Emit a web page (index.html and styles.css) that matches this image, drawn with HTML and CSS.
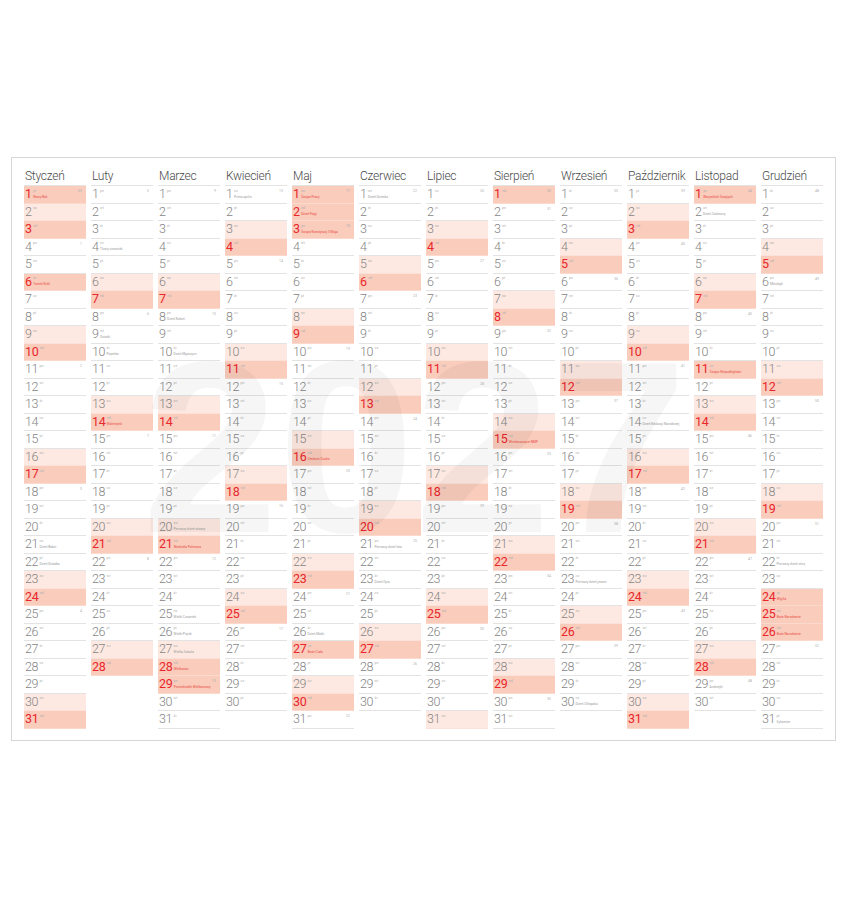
FILE: index.html
```html
<!DOCTYPE html>
<html lang="pl">
<head>
<meta charset="utf-8">
<title>Kalendarz 2027</title>
<link rel="stylesheet" href="styles.css">
</head>
<body>
<div class="page">
  <div class="frame">
    <div class="grid" id="grid"></div>
    <div class="mark">2027</div>
  </div>
</div>
<script src="script.js"></script>
</body>
</html>
```
FILE: styles.css
```css
body {
  margin: 0;
  background: #ffffff;
  font-family: Roboto, "Liberation Sans", sans-serif;
}
.page {
  padding: 157px 0 0 11px;
}
.frame {
  position: relative;
  width: 825px;
  box-sizing: border-box;
  border: 1px solid #d6d6d6;
  padding: 10px 12px 11px 12px;
}
.grid {
  display: grid;
  grid-template-columns: repeat(12, 62px);
  column-gap: 5px;
  align-items: start;
}
.mname {
  font-size: 12px;
  font-weight: 300;
  line-height: 16px;
  color: #4a4a4a;
  padding-left: 1px;
  margin-bottom: 1px;
  letter-spacing: -0.25px;
  white-space: nowrap;
}
.days {
  border-top: 1px solid #e3e3e3;
}
.day {
  display: flex;
  height: 17.5px;
  box-sizing: border-box;
  border-bottom: 1px solid #e3e3e3;
  padding-left: 1px;
}
.day.sat {
  background: #fde9e1;
  border-bottom-color: #fbe1d7;
}
.day.red {
  background: #f9ccbc;
  border-bottom-color: #fbd9cc;
}
.num {
  font-size: 12.5px;
  font-weight: 300;
  line-height: 16.5px;
  color: #858585;
  letter-spacing: -0.4px;
}
.red .num {
  color: #e8262b;
  font-weight: 400;
}
.meta {
  display: flex;
  flex-direction: column;
  justify-content: space-between;
  padding: 2.5px 0 4px 1.5px;
}
.dw {
  font-size: 3.5px;
  line-height: 4px;
  color: #b0b0b0;
}
.note {
  font-size: 3.2px;
  line-height: 4px;
  color: #9a9a9a;
  white-space: nowrap;
}
.red .note {
  color: #ea4a44;
}
.wk {
  margin-left: auto;
  font-size: 3.5px;
  line-height: 4px;
  color: #b0b0b0;
  padding: 3px 4px 0 0;
}
.mark {
  position: absolute;
  left: 130px;
  top: 167px;
  font-family: "Liberation Sans", sans-serif;
  font-weight: bold;
  font-size: 245px;
  line-height: 245px;
  color: rgba(0, 0, 0, 0.035);
  pointer-events: none;
}
```
FILE: script.js
```js
(function () {
  var months = ["Styczeń","Luty","Marzec","Kwiecień","Maj","Czerwiec","Lipiec","Sierpień","Wrzesień","Październik","Listopad","Grudzień"];
  var dn = ["nd","pn","wt","śr","cz","pt","so"];
  var holidays = {"1-1":1,"1-6":1,"3-28":1,"3-29":1,"5-1":1,"5-3":1,"5-16":1,"5-27":1,"8-15":1,"11-1":1,"11-11":1,"12-24":1,"12-25":1,"12-26":1};
  var notes = {
    "1-1":"Nowy Rok","1-6":"Trzech Króli","1-21":"Dzień Babci","1-22":"Dzień Dziadka",
    "2-4":"Tłusty czwartek","2-9":"Ostatki","2-10":"Popielec","2-14":"Walentynki",
    "3-8":"Dzień Kobiet","3-10":"Dzień Mężczyzn","3-20":"Pierwszy dzień wiosny","3-21":"Niedziela Palmowa",
    "3-25":"Wielki Czwartek","3-26":"Wielki Piątek","3-27":"Wielka Sobota","3-28":"Wielkanoc","3-29":"Poniedziałek Wielkanocny",
    "4-1":"Prima aprilis",
    "5-1":"Święto Pracy","5-2":"Dzień Flagi","5-3":"Święto Konstytucji 3 Maja","5-16":"Zesłanie Ducha","5-26":"Dzień Matki","5-27":"Boże Ciało",
    "6-1":"Dzień Dziecka","6-21":"Pierwszy dzień lata","6-23":"Dzień Ojca",
    "8-15":"Wniebowzięcie NMP",
    "9-23":"Pierwszy dzień jesieni","9-30":"Dzień Chłopaka",
    "10-14":"Dzień Edukacji Narodowej",
    "11-1":"Wszystkich Świętych","11-2":"Dzień Zaduszny","11-11":"Święto Niepodległości","11-29":"Andrzejki",
    "12-6":"Mikołajki","12-22":"Pierwszy dzień zimy","12-24":"Wigilia","12-25":"Boże Narodzenie","12-26":"Boże Narodzenie","12-31":"Sylwester"
  };
  function isoWeek(y, m, d) {
    var t = new Date(Date.UTC(y, m, d));
    var day = t.getUTCDay() || 7;
    t.setUTCDate(t.getUTCDate() + 4 - day);
    var y0 = new Date(Date.UTC(t.getUTCFullYear(), 0, 1));
    return Math.ceil(((t - y0) / 86400000 + 1) / 7);
  }
  function el(tag, cls, text) {
    var e = document.createElement(tag);
    if (cls) e.className = cls;
    if (text !== undefined) e.textContent = text;
    return e;
  }
  var grid = document.getElementById("grid");
  for (var m = 0; m < 12; m++) {
    var col = el("div", "month");
    col.appendChild(el("div", "mname", months[m]));
    var days = el("div", "days");
    var len = new Date(2027, m + 1, 0).getDate();
    for (var d = 1; d <= len; d++) {
      var wd = new Date(2027, m, d).getDay();
      var key = (m + 1) + "-" + d;
      var cls = "day";
      if (wd === 0 || holidays[key]) cls += " red";
      else if (wd === 6) cls += " sat";
      var row = el("div", cls);
      row.appendChild(el("span", "num", String(d)));
      var meta = el("span", "meta");
      meta.appendChild(el("span", "dw", dn[wd]));
      meta.appendChild(el("span", "note", notes[key] || ""));
      row.appendChild(meta);
      if (wd === 1 || d === 1) row.appendChild(el("span", "wk", String(isoWeek(2027, m, d))));
      days.appendChild(row);
    }
    col.appendChild(days);
    grid.appendChild(col);
  }
})();
```
